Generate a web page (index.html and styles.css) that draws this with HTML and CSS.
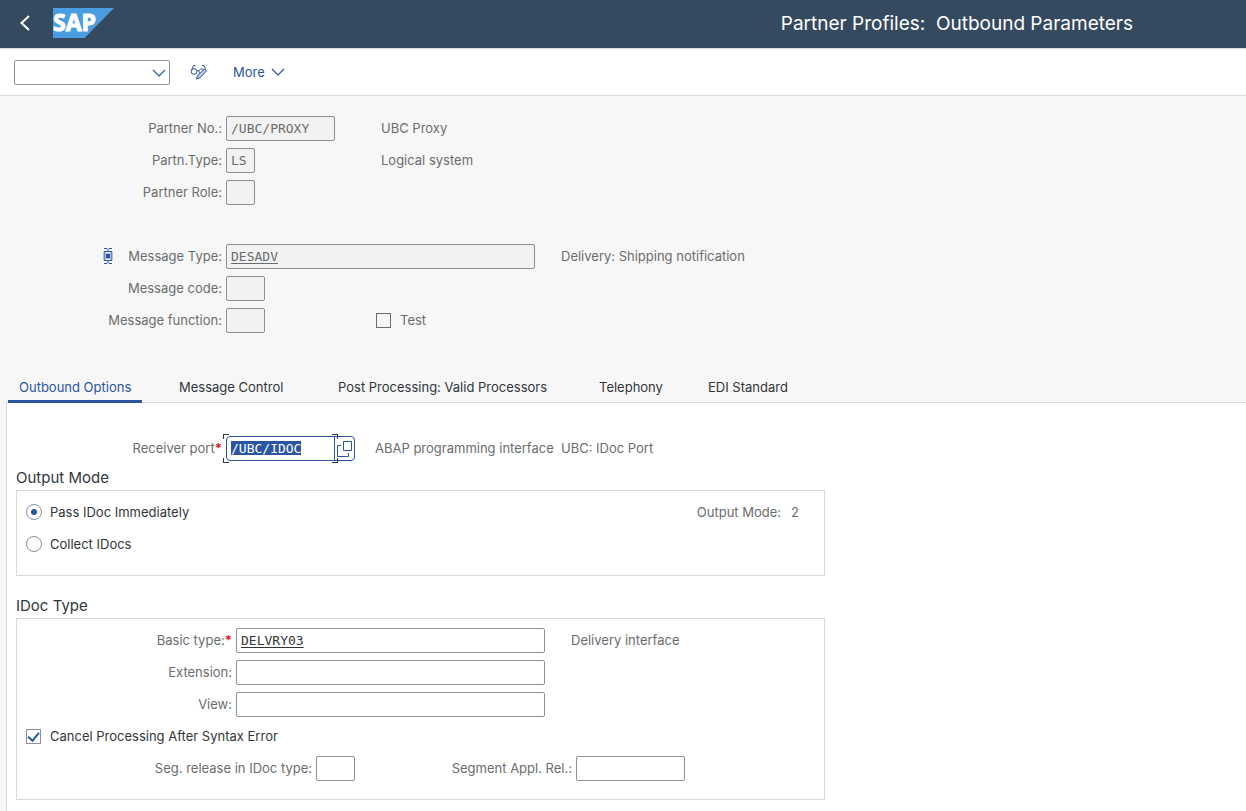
FILE: index.html
```html
<!DOCTYPE html>
<html lang="en">
<head>
<meta charset="utf-8">
<title>Partner Profiles: Outbound Parameters</title>
<link rel="stylesheet" href="styles.css">
</head>
<body>
<header class="shell">
  <button class="icon-btn back" type="button" aria-label="Back"><svg width="12" height="16" viewBox="0 0 12 16"><path d="M10 1 2.500 8 10 15" fill="none" stroke="currentColor" stroke-width="2"/></svg></button>
  <svg class="logo" width="61" height="30" viewBox="0 0 61 30" role="img" aria-label="SAP">
    <path d="M0 0H61L31.500 30H0Z" fill="#4a9ee0"/>
    <text class="logo-text" x="0" y="23">SAP</text>
  </svg>
  <h1 class="title">Partner Profiles:&nbsp; Outbound Parameters</h1>
</header>
<nav class="toolbar" aria-label="Toolbar">
  <span class="command">
    <input class="field command-input" type="text" aria-label="Command">
    <button class="icon-btn command-btn" type="button" aria-label="Command history"><svg width="14" height="8" viewBox="0 0 14 8"><path d="M1 1 7 7 13 1" fill="none" stroke="currentColor" stroke-width="1.200"/></svg></button>
  </span>
  <button class="icon-btn toggle" type="button" aria-label="Display or change">
    <svg width="18" height="16" viewBox="0 0 18 16" fill="none" stroke="currentColor"><circle cx="4" cy="7.500" r="2.800"/><path d="M1.500 6.500 3.500 1.500H5.500M6.800 7Q8 6 9.200 7M12 9.500C9 10.500 8 6.500 10.500 5.200 12.500 4.400 14 5.500 14 6.500M12 1.500H14L15.500 5"/><path d="M6.500 15 7.500 11.500 14.500 5 16.500 7 10 13.800Z" fill="#b9cdea"/></svg>
  </button>
  <button class="more" type="button">More <svg width="14" height="8" viewBox="0 0 14 8"><path d="M1 1 7 7 13 1" fill="none" stroke="currentColor" stroke-width="1.200"/></svg></button>
</nav>
<main class="page">
  <section class="form head-form">
    <div class="row"><label class="label" for="pno">Partner No.:</label><span class="cell mid"><input id="pno" class="field w-10" value="/UBC/PROXY" readonly></span><span class="desc">UBC Proxy</span></div>
    <div class="row"><label class="label" for="ptype">Partn.Type:</label><span class="cell mid"><input id="ptype" class="field w-2" value="LS" readonly></span><span class="desc">Logical system</span></div>
    <div class="row"><label class="label" for="prole">Partner Role:</label><input id="prole" class="field w-2" readonly></div>
    <div class="row"></div>
    <div class="row"><label class="label" for="mtype"><svg class="detail" width="10" height="16" viewBox="0 0 10 16" fill="none" stroke="currentColor"><path d="M1 .5H4L5 1.500 6 .5H9M1 15.500H4L5 14.500 6 15.500H9M5 1.500V4M5 12V14.500M1 3.500H9M1 12.500H9"/><path d="M1.500 3.500V12.500M8.500 3.500V12.500" stroke-width="2" opacity=".7"/><path d="M3.500 6H6.500V10H3.500Z" fill="currentColor"/></svg>Message Type:</label><span class="cell wide"><input id="mtype" class="field w-30 linked" value="DESADV" readonly></span><span class="desc">Delivery: Shipping notification</span></div>
    <div class="row"><label class="label" for="mcode">Message code:</label><input id="mcode" class="field w-3" readonly></div>
    <div class="row"><label class="label" for="mfunc">Message function:</label><span class="cell mid"><input id="mfunc" class="field w-3" readonly></span><label class="choice muted"><input class="check" type="checkbox" disabled>Test</label></div>
  </section>
  <div class="tabs" role="tablist">
    <button class="tab active" role="tab" aria-selected="true" type="button">Outbound Options</button>
    <button class="tab" role="tab" type="button">Message Control</button>
    <button class="tab" role="tab" type="button">Post Processing: Valid Processors</button>
    <button class="tab" role="tab" type="button">Telephony</button>
    <button class="tab" role="tab" type="button">EDI Standard</button>
  </div>
  <section class="panel" role="tabpanel">
    <div class="row receiver">
      <label class="label" for="port">Receiver port<span class="req">*</span></label>
      <span class="cell port">
        <span class="port-box">
          <input id="port" class="field linked port-input" value="/UBC/IDOC">
          <button class="icon-btn help" type="button" aria-label="Value help"><svg width="18" height="18" viewBox="0 0 18 18" fill="none" stroke="currentColor"><path d="M7.500 1.500H15.500V10.500H7.500ZM5 5.500H1.500V16.500H12.500V13"/></svg></button>
          <span class="corner tl"></span><span class="corner tr"></span><span class="corner bl"></span><span class="corner br"></span>
        </span>
      </span>
      <span class="desc port-desc">ABAP programming interface</span><span class="desc">UBC: IDoc Port</span>
    </div>
    <fieldset class="group">
      <legend class="group-title">Output Mode</legend>
      <div class="box">
        <div class="row"><label class="choice"><input class="radio" type="radio" name="mode" checked>Pass IDoc Immediately</label><span class="mode-value"><span>Output Mode:</span><span>2</span></span></div>
        <div class="row"><label class="choice"><input class="radio" type="radio" name="mode">Collect IDocs</label></div>
      </div>
    </fieldset>
    <fieldset class="group">
      <legend class="group-title">IDoc Type</legend>
      <div class="box">
        <div class="row"><label class="label" for="basic">Basic type:<span class="req">*</span></label><span class="cell wide"><input id="basic" class="field w-30 linked" value="DELVRY03"></span><span class="desc">Delivery interface</span></div>
        <div class="row"><label class="label" for="ext">Extension:</label><input id="ext" class="field w-30"></div>
        <div class="row"><label class="label" for="view">View:</label><input id="view" class="field w-30"></div>
        <div class="row"><label class="choice"><input class="check" type="checkbox" checked>Cancel Processing After Syntax Error</label></div>
        <div class="row"><label class="label seg" for="segrel">Seg. release in IDoc type:</label><input id="segrel" class="field w-3"><label class="label appl" for="appl">Segment Appl. Rel.:</label><input id="appl" class="field w-10"></div>
      </div>
    </fieldset>
  </section>
</main>
<script src="app.js"></script>
</body>
</html>
```
FILE: styles.css
```css
* { box-sizing: border-box; }
body {
  margin: 0;
  min-height: 100vh;
  display: flex;
  flex-direction: column;
  background: #f7f7f7;
  color: #32363a;
  font: 13px/18px Inter, "Open Sans", sans-serif;
}
button, input { font: inherit; color: inherit; }
button { background: none; border: 0; padding: 0; }
svg { display: block; flex: none; }
.icon-btn { display: flex; align-items: center; justify-content: center; }

.shell {
  display: flex;
  align-items: center;
  height: 49px;
  padding: 0 113px 2px 19px;
  background: #354a5f;
  border-bottom: 1px solid #d9d9d9;
  color: #fff;
}
.back { width: 12px; margin-right: 22px; }
.logo { overflow: visible; }
.logo-text { font: bold 23px "Open Sans", sans-serif; fill: #fff; stroke: #fff; stroke-width: 1px; }
.title { margin: 0 0 0 auto; padding-top: 2px; font-size: 19px; line-height: 24px; font-weight: 400; }

.toolbar {
  display: flex;
  align-items: center;
  height: 47px;
  padding-left: 14px;
  background: #fff;
  border-bottom: 1px solid #d9d9d9;
  color: #2b55a0;
}
.command { position: relative; margin-right: 20px; }
.command-input { display: block; width: 156px; height: 26px; }
.command-btn { position: absolute; top: 0; right: 0; width: 22px; height: 26px; }
.toggle { width: 18px; margin-right: 25px; }
.more { display: flex; align-items: center; gap: 6px; }

.page { flex: 1; display: flex; flex-direction: column; }
.head-form { display: flex; flex-direction: column; gap: 7px; padding-top: 20px; }
.row { display: flex; align-items: center; height: 25px; }
.label {
  display: flex;
  justify-content: flex-end;
  flex: none;
  width: 222px;
  margin-right: 4px;
  color: #6a6d70;
  white-space: nowrap;
}
.label, .desc, .choice, .mode-value { padding-bottom: 1px; }
.detail { margin: 1px 15px 0 0; color: #2b55a0; }
.cell { display: flex; flex: none; }
.mid { width: 150px; }
.wide { width: 330px; }
.desc { padding-left: 5px; color: #6a6d70; white-space: nowrap; }
.field {
  height: 25px;
  padding: 0 4px;
  border: 1px solid #89919a;
  border-radius: 2px;
  background: #fff;
  font: 13px/16px "DejaVu Sans Mono", monospace;
  outline: 0;
}
.field:read-only { background: #f2f2f2; color: #6a6d70; }
.w-2 { width: 29px; }
.w-3 { width: 39px; }
.w-10 { width: 109px; }
.w-30 { width: 309px; }
.linked { text-decoration: underline; text-underline-offset: 2px; }
.req { color: #d22; font-weight: 700; }

.choice { display: flex; align-items: center; gap: 9px; }
.muted { color: #6a6d70; }
.check, .radio { appearance: none; margin: 0; background: #fff; }
.check { display: grid; place-items: center; width: 15px; height: 15px; border: 1px solid #89919a; }
.check:disabled { background: #f7f7f7; border-color: #6a6d70; }
.check:checked::after {
  content: "";
  width: 5px;
  height: 9px;
  margin-bottom: 3px;
  border: solid #2b55a0;
  border-width: 0 2px 2px 0;
  transform: rotate(40deg);
}
.radio { display: grid; place-items: center; width: 16px; height: 16px; margin-right: -1px; border: 1px solid #89919a; border-radius: 50%; }
.radio:checked::after { content: ""; width: 6px; height: 6px; border-radius: 50%; background: #2b55a0; }

.tabs {
  display: grid;
  grid-template-columns: 160px 159px 261px 109px auto;
  justify-items: start;
  margin: 39px 0 -1px 8px;
  z-index: 1;
}
.tab { height: 31px; padding: 1px 11px 0; border-bottom: 3px solid transparent; white-space: nowrap; }
.active { color: #2b55a0; border-color: #2b55a0; }

.panel {
  flex: 1;
  margin-left: 6px;
  padding: 33px 9px 11px;
  background: #fff;
  border: solid #d9d9d9;
  border-width: 1px 0 0 1px;
}
.receiver .label { width: 206px; }
.port { width: 144px; }
.port-box {
  position: relative;
  display: flex;
  width: 129px;
  height: 25px;
  border: 1px solid #2b55a0;
  border-radius: 4px;
}
.port-input { width: 108px; height: 23px; border: 0; border-right: 1px solid #2b55a0; border-radius: 0; padding-left: 4px; background: none; }
.port-input::selection { background: #2b55a0; color: #fff; }
.help { flex: 1; color: #2b55a0; }
.corner { position: absolute; width: 6px; height: 5px; border: 0 solid #32363a; }
.tl { left: -4px; top: -3px; border-width: 1px 0 0 1px; }
.tr { left: 105px; top: -3px; border-width: 1px 1px 0 0; }
.bl { left: -4px; bottom: -3px; border-width: 0 0 1px 1px; }
.br { left: 105px; bottom: -3px; border-width: 0 1px 1px 0; }
.port-desc { width: 186px; }

.group { margin: 5px 0 0; padding: 0; border: 0; max-width: 809px; }
.group-title { display: block; padding: 0; font-size: 15px; line-height: 24px; }
.group + .group { margin-top: 18px; }
.box { display: flex; flex-direction: column; gap: 7px; padding: 9px 9px 18px; border: 1px solid #d9d9d9; }
.box .label { width: 206px; }
.box .seg { width: 286px; }
.box .appl { width: 217px; }
.mode-value { display: flex; gap: 10px; margin: 0 16px 0 auto; color: #6a6d70; }
```
FILE: app.js
```js
const port = document.getElementById('port');
port.focus();
port.select();
```
